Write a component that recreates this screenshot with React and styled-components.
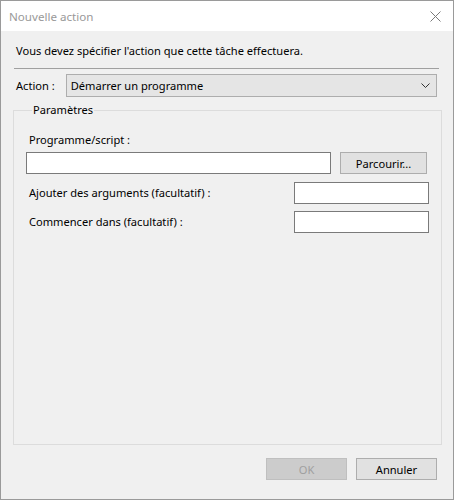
import React from 'react';
import styled, { createGlobalStyle } from 'styled-components';

const Global = createGlobalStyle`
  html, body { margin: 0; padding: 0; background: #6b6b6b; }
  body { font-family: "Noto Sans", "Segoe UI", sans-serif; font-size: 11.1px; color: #000; }
`;

const Window = styled.div`
  width: 454px;
  height: 500px;
  box-sizing: border-box;
  border: 1px solid #9a9a9a;
  background: #f0f0f0;
  display: flex;
  flex-direction: column;
`;

const TitleBar = styled.div`
  height: 30px;
  background: #fff;
  display: flex;
  align-items: center;
  justify-content: space-between;
  padding: 0 12px 0 8px;
  color: #999;
  font-size: 11.6px;
`;

const Body = styled.div`
  flex: 1;
  display: flex;
  flex-direction: column;
  padding: 11px 11px 0 12px;
`;

const Intro = styled.div`
  margin-left: 3px;
  line-height: 18px;
`;

const Separator = styled.div`
  height: 1px;
  background: #a0a0a0;
  margin: 8px 3px 5px 1px;
`;

const ActionRow = styled.div`
  display: flex;
  align-items: center;
  gap: 11px;
  padding-left: 3px;
  padding-right: 5px;
`;

const Select = styled.div`
  flex: 1;
  height: 23px;
  box-sizing: border-box;
  border: 1px solid #adadad;
  background: #e5e5e5;
  display: flex;
  align-items: center;
  justify-content: space-between;
  padding: 0 6px 0 4px;
`;

const Group = styled.fieldset`
  margin: 5px 0 0 0;
  height: 343px;
  box-sizing: border-box;
  border: 1px solid #dcdcdc;
  padding: 13px 12px 0 12px;
  min-width: 0;
`;

const Legend = styled.legend`
  padding: 0 1px;
  margin-left: 6px;
  line-height: 16px;
`;

const FieldLabel = styled.div`
  padding-left: 3px;
  line-height: 18px;
`;

const BrowseRow = styled.div`
  display: flex;
  align-items: center;
  gap: 9px;
  margin-top: 3px;
`;

const TextBox = styled.div`
  width: ${p => p.$w}px;
  height: 22px;
  box-sizing: border-box;
  border: 1px solid #7a7a7a;
  background: #fff;
`;

const Button = styled.div`
  width: ${p => p.$w || 81}px;
  height: 22px;
  box-sizing: border-box;
  border: 1px solid ${p => (p.$disabled ? '#bfbfbf' : '#adadad')};
  background: ${p => (p.$disabled ? '#cccccc' : '#e1e1e1')};
  color: ${p => (p.$disabled ? '#9f9f9f' : '#000')};
  display: flex;
  align-items: center;
  justify-content: center;
`;

const OptionRow = styled.div`
  display: flex;
  align-items: center;
  justify-content: space-between;
  margin-top: ${p => p.$top}px;
`;

const Footer = styled.div`
  display: flex;
  justify-content: flex-end;
  gap: 9px;
  padding: 13px 5px 0 0;
`;

function CloseIcon() {
  return (
    <svg width="11" height="11" viewBox="0 0 11 11">
      <path d="M0.5 0.5 L10.5 10.5 M10.5 0.5 L0.5 10.5" stroke="#7a7a7a" strokeWidth="1" />
    </svg>
  );
}

function Chevron() {
  return (
    <svg width="9" height="6" viewBox="0 0 9 6">
      <path d="M0.5 0.5 L4.5 4.5 L8.5 0.5" stroke="#333" strokeWidth="1" fill="none" />
    </svg>
  );
}

export default function App() {
  return (
    <>
      <Global />
      <Window>
        <TitleBar>
          <span>Nouvelle action</span>
          <CloseIcon />
        </TitleBar>
        <Body>
          <Intro>Vous devez spécifier l'action que cette tâche effectuera.</Intro>
          <Separator />
          <ActionRow>
            <span>Action :</span>
            <Select>
              <span>Démarrer un programme</span>
              <Chevron />
            </Select>
          </ActionRow>
          <Group>
            <Legend>Paramètres</Legend>
            <FieldLabel>Programme/script :</FieldLabel>
            <BrowseRow>
              <TextBox $w={305} />
              <Button $w={87}>Parcourir...</Button>
            </BrowseRow>
            <OptionRow $top={8}>
              <FieldLabel>Ajouter des arguments (facultatif) :</FieldLabel>
              <TextBox $w={135} />
            </OptionRow>
            <OptionRow $top={7}>
              <FieldLabel>Commencer dans (facultatif) :</FieldLabel>
              <TextBox $w={135} />
            </OptionRow>
          </Group>
          <Footer>
            <Button $disabled>OK</Button>
            <Button>Annuler</Button>
          </Footer>
        </Body>
      </Window>
    </>
  );
}
